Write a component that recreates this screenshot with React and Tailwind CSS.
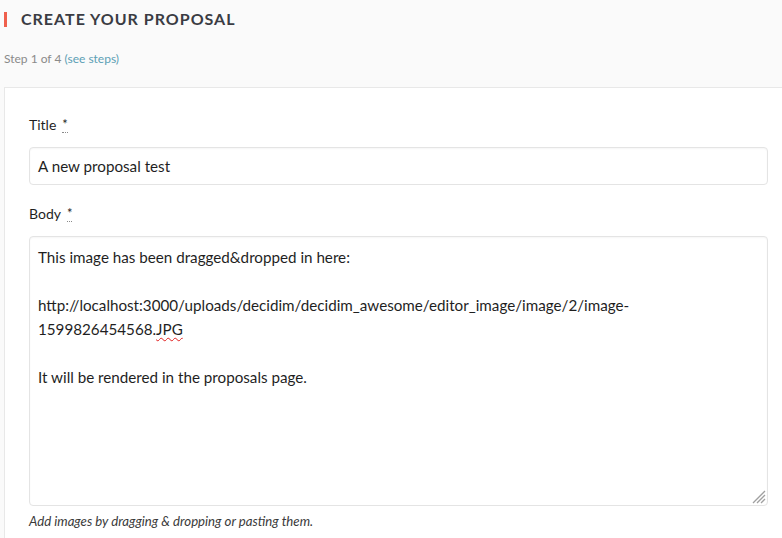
export default function App() {
  return (
    <div className="min-h-screen w-[782px] overflow-hidden bg-[#fafafa] font-['Lato',sans-serif] text-[#1f1f1f]">
      <div className="px-1 pt-[9px]">
        <div className="flex items-center">
          <span className="h-[15px] w-[3px] bg-[#ef604d]" />
          <h1 className="ml-[14px] text-[16px] font-bold uppercase leading-[20px] tracking-[1px] text-[#3a3c43]">
            Create your proposal
          </h1>
        </div>
        <p className="mt-[22px] text-[12px] leading-[16px] text-[#8a8a8a]">
          Step 1 of 4 <a className="text-[#5c9fb5]">(see steps)</a>
        </p>
      </div>
      <div className="ml-1 mt-[20px] -mr-4 border border-[#e8e8e8] bg-white pl-6 pr-[29px] pt-[28px] pb-6">
        <label className="flex items-start text-[14px] leading-[18px] text-[#1f1f1f]">
          Title
          <abbr className="ml-[6px] border-b border-dotted border-[#8a8a8a] text-[13px] leading-[16px] no-underline">*</abbr>
        </label>
        <div className="mt-[13px] flex h-[38px] items-center rounded-[4px] border border-[#e4e4e4] px-2 text-[15.2px] shadow-[inset_0_1px_2px_rgba(0,0,0,0.04)]">
          A new proposal test
        </div>
        <label className="mt-[20px] flex items-start text-[14px] leading-[18px] text-[#1f1f1f]">
          Body
          <abbr className="ml-[6px] border-b border-dotted border-[#8a8a8a] text-[13px] leading-[16px] no-underline">*</abbr>
        </label>
        <div className="relative mt-[13px] h-[270px] rounded-[4px] border border-[#e4e4e4] px-2 pt-2 text-[15.2px] leading-[24px] shadow-[inset_0_1px_2px_rgba(0,0,0,0.04)]">
          <p>This image has been dragged&amp;dropped in here:</p>
          <p>&nbsp;</p>
          <p>http://localhost:3000/uploads/decidim/decidim_awesome/editor_image/image/2/image-</p>
          <p>
            1599826454568.<span className="underline decoration-wavy decoration-[#e02020] decoration-1 underline-offset-2">JPG</span>
          </p>
          <p>&nbsp;</p>
          <p>It will be rendered in the proposals page.</p>
          <svg className="absolute bottom-[1px] right-[1px]" width="14" height="14" viewBox="0 0 14 14">
            <path d="M13 1 L1 13 M13 5 L5 13 M13 9 L9 13" stroke="#a0a0a0" strokeWidth="1.3" />
          </svg>
        </div>
        <p className="mt-[7px] text-[13.2px] italic leading-[16px] text-[#3a3a3a]">
          Add images by dragging &amp; dropping or pasting them.
        </p>
      </div>
    </div>
  );
}
